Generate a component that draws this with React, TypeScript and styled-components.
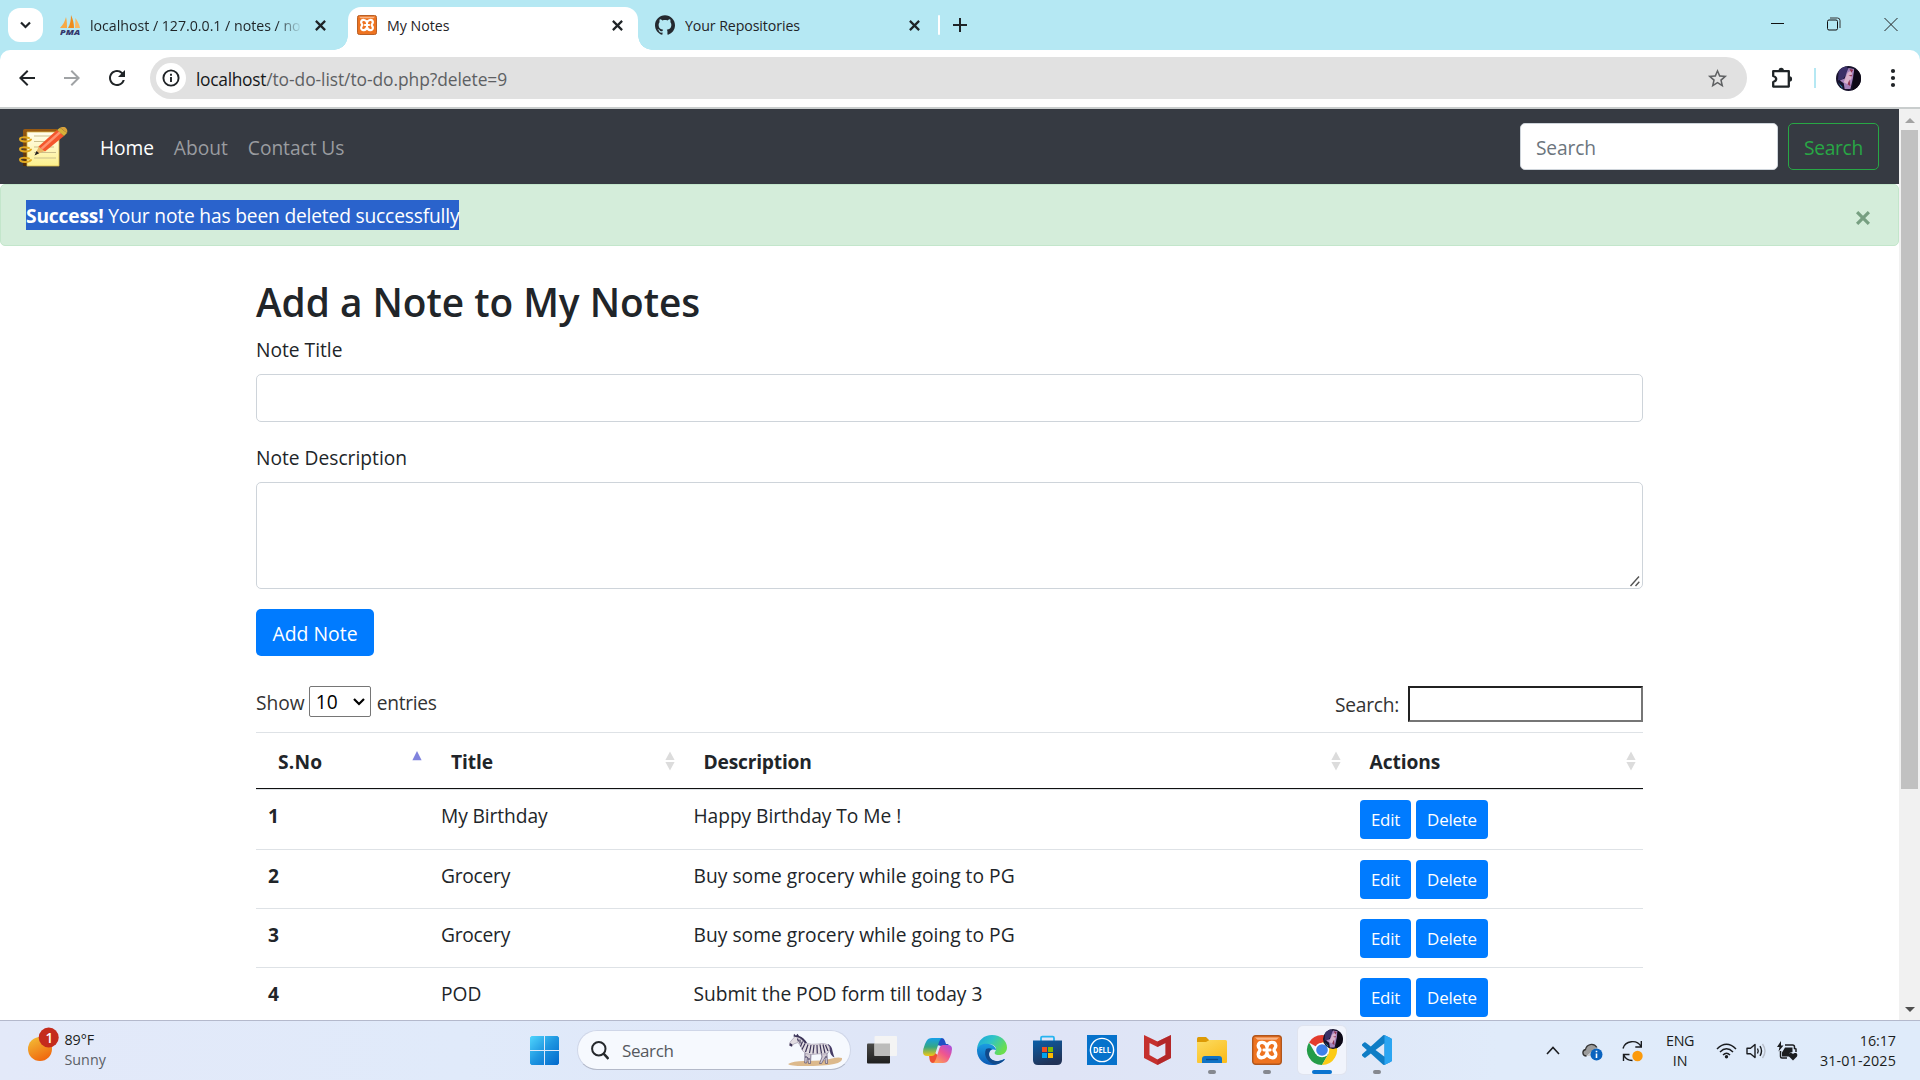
import React from "react";
import styled, { createGlobalStyle, css } from "styled-components";
import { MdArrowBack, MdArrowForward, MdRefresh, MdStarBorder } from "react-icons/md";
import { SiGithub } from "react-icons/si";

const GlobalStyle = createGlobalStyle`
  * { box-sizing: border-box; }
  body { margin: 0; overflow: hidden; background: #fff; }
  body, button, input { font-family: "Open Sans", "Noto Sans", sans-serif; }
  svg { display: block; flex: none; }
`;

/* ---------- shared ---------- */

const Screen = styled.div`
  display: flex;
  flex-direction: column;
  width: 1920px;
  height: 1080px;
  overflow: hidden;
  color: #212529;
`;

const Text = styled.span<{ $ls?: number }>`
  white-space: nowrap;
  letter-spacing: ${(p) => p.$ls ?? 0}px;
`;

/* ---------- browser chrome ---------- */

const TabStrip = styled.div`
  display: flex;
  height: 50px;
  flex: none;
  background: #b5e8f3;
  padding: 8px 0 0 8px;
  color: #1f2427;
`;

const TabSearch = styled.div`
  display: grid;
  place-items: center;
  width: 35px;
  height: 34px;
  border-radius: 12px;
  background: #fff;
`;

const Tab = styled.div<{ $active?: boolean; $width: number; $end?: number }>`
  position: relative;
  display: flex;
  align-items: center;
  width: ${(p) => p.$width}px;
  height: ${(p) => (p.$active ? 43 : 34)}px;
  margin-top: ${(p) => (p.$active ? -1 : 0)}px;
  padding: ${(p) => (p.$active ? "0 15px 7px 9px" : `0 ${p.$end}px 0 17px`)};
  font-size: 14.2px;
  ${(p) =>
    p.$active &&
    css`
      background: #fff;
      border-radius: 13px 13px 0 0;
      &::before,
      &::after {
        content: "";
        position: absolute;
        bottom: 0;
        width: 14px;
        height: 14px;
      }
      &::before {
        left: -14px;
        background: radial-gradient(circle at 0 0, transparent 13.5px, #fff 14px);
      }
      &::after {
        right: -14px;
        background: radial-gradient(circle at 100% 0, transparent 13.5px, #fff 14px);
      }
    `}
`;

const TabLabel = styled.div<{ $fade?: boolean; $ls?: number }>`
  flex: 1;
  min-width: 0;
  overflow: hidden;
  white-space: nowrap;
  margin: 1px 13px 0 10px;
  letter-spacing: ${(p) => p.$ls ?? 0}px;
  line-height: 22px;
  ${(p) =>
    p.$fade &&
    css`
      mask-image: linear-gradient(to right, #000 88%, transparent 100%);
    `}
`;

const TabSeparator = styled.div`
  width: 2px;
  height: 20px;
  margin-top: 7px;
  border-radius: 1px;
  background: #fff;
`;

const NewTab = styled.div`
  padding: 10px 0 0 13px;
`;

const WindowButtons = styled.div`
  display: flex;
  gap: 43px;
  margin-left: auto;
  padding: 9px 22px 0 0;
`;

const ToolbarBack = styled.div`
  flex: none;
  height: 59px;
  background: #b5e8f3;
`;

const Toolbar = styled.div`
  display: flex;
  align-items: center;
  height: 59px;
  padding: 0 19px 1px 15px;
  background: #fff;
  border-bottom: 2px solid #c9cdcd;
  border-radius: 10px 10px 0 0;
  color: #202427;
`;

const NavIcons = styled.div`
  display: flex;
  gap: 21px;
  width: 135px;
`;

const Omnibox = styled.div`
  display: flex;
  align-items: center;
  width: 1597px;
  height: 42px;
  padding: 0 18px 0 6px;
  border-radius: 21px;
  background: #e1e1e1;
  font-size: 17.4px;
  color: #5d6063;
`;

const SiteInfo = styled.div`
  display: grid;
  place-items: center;
  width: 30px;
  height: 30px;
  margin-right: 10px;
  border-radius: 50%;
  background: #fff;
`;

const Url = styled.div`
  display: flex;
  padding-top: 2px;
`;

const UrlHost = styled(Text)`
  color: #17191b;
`;

const OmniStar = styled.div`
  margin-left: auto;
  color: #5f6163;
`;

const ToolbarDivider = styled.div`
  width: 2px;
  height: 20px;
  margin: 0 20px 0 21px;
  background: #b5e8f3;
`;

const ToolbarEnd = styled.div`
  display: flex;
  align-items: center;
  margin-left: 24px;
`;

const MenuDots = styled.div`
  margin-left: 29px;
`;

/* ---------- page ---------- */

const Viewport = styled.div`
  display: flex;
  height: 911px;
  flex: none;
  overflow: hidden;
`;

const Page = styled.div`
  width: 1899px;
  height: 911px;
  overflow: hidden;
  font-size: 19.2px;
  line-height: 30px;
`;

const Navbar = styled.nav`
  display: flex;
  align-items: center;
  height: 75px;
  padding: 0 20px 0 19px;
  background: #363a42;
`;

const Brand = styled.a`
  padding-top: 3px;
`;

const NavLinks = styled.div`
  display: flex;
  gap: 20px;
  margin-left: 29px;
  padding-top: 2px;
`;

const NavLink = styled.a<{ $active?: boolean }>`
  color: ${(p) => (p.$active ? "#fff" : "#9a9ca0")};
`;

const NavSearch = styled.div`
  display: flex;
  gap: 10px;
  margin-left: auto;
`;

const NavInput = styled.input`
  width: 258px;
  height: 47px;
  padding: 2px 15px 0;
  border: 1px solid #ced4da;
  border-radius: 5px;
  font-size: 19.2px;
  letter-spacing: -0.15px;
  &::placeholder {
    color: #6c757d;
    opacity: 1;
  }
`;

const OutlineButton = styled.button`
  width: 91px;
  height: 47px;
  padding: 1px 0 0;
  border: 1px solid #28a745;
  border-radius: 5px;
  background: transparent;
  color: #28a745;
  font-size: 19.2px;
  letter-spacing: -0.3px;
`;

const Alert = styled.div`
  display: flex;
  align-items: flex-start;
  justify-content: space-between;
  height: 62px;
  padding: 15px 28.5px 0 25px;
  border: 1px solid #c3e6cb;
  border-radius: 5px;
  background: #d4edda;
`;

const Selection = styled.span`
  height: 30px;
  background: #2a63cc;
  color: #fff;
  letter-spacing: -0.17px;
  white-space: nowrap;
  line-height: 32px;
`;

const AlertClose = styled.div`
  padding-top: 11px;
`;

const Container = styled.main`
  width: 1387px;
  margin: 30px 0 0 256px;
`;

const Heading = styled.h2`
  height: 48px;
  margin: 0 0 10px;
  padding-top: 2px;
  font-size: 38.8px;
  font-weight: 600;
  line-height: 48px;
  letter-spacing: -0.03px;
`;

const Label = styled.label`
  display: block;
  height: 30px;
  padding-top: 1px;
  margin-bottom: 10px;
`;

const fieldBox = css`
  display: block;
  width: 100%;
  border: 1px solid #ced4da;
  border-radius: 5px;
  background: #fff;
  margin-bottom: 20px;
`;

const TitleField = styled.input`
  ${fieldBox}
  height: 48px;
`;

const DescriptionField = styled.div`
  ${fieldBox}
  display: flex;
  align-items: flex-end;
  justify-content: flex-end;
  height: 107px;
  padding: 1px;
`;

const PrimaryButton = styled.button<{ $small?: boolean; $width: number }>`
  width: ${(p) => p.$width}px;
  height: ${(p) => (p.$small ? 38.5 : 47)}px;
  padding: 1px 0 0;
  border: 0;
  border-radius: ${(p) => (p.$small ? 4 : 5)}px;
  background: #007bff;
  color: #fff;
  font-size: ${(p) => (p.$small ? 16.9 : 19.4)}px;
  letter-spacing: ${(p) => (p.$small ? -0.2 : 0)}px;
`;

const TableControls = styled.div`
  display: flex;
  justify-content: space-between;
  height: 46px;
  margin-top: 30px;
  color: #333;
`;

const LengthControl = styled.div`
  display: flex;
  align-items: center;
  height: 34px;
`;

const LengthSelect = styled.div`
  display: flex;
  align-items: center;
  justify-content: space-between;
  width: 62px;
  height: 31px;
  margin: -3px 6px 0 4px;
  padding: 1px 5px 0 6px;
  border: 1px solid #767676;
  border-radius: 2px;
  color: #000;
`;

const FilterControl = styled.label`
  display: flex;
  align-items: center;
  gap: 9px;
  height: 36px;
`;

const FilterLabel = styled(Text)`
  padding-top: 2px;
`;

const FilterInput = styled.input`
  width: 235px;
  height: 36px;
  border: 2px inset #767676;
  background: #fff;
`;

const Row = styled.div<{ $head?: boolean; $height: number }>`
  display: grid;
  grid-template-columns: 173px 252.5px 666px 295.5px;
  height: ${(p) => p.$height}px;
  border-top: 1px solid #dee2e6;
  ${(p) =>
    p.$head &&
    css`
      border-bottom: 1px solid #111;
      font-weight: 700;
    `}
`;

const HeadCell = styled.div`
  display: flex;
  justify-content: space-between;
  padding: 14px 6px 0 22px;
`;

const SortIcon = styled.div`
  padding-top: 4px;
`;

const Cell = styled.div<{ $bold?: boolean }>`
  padding: 11px 0 0 12px;
  font-weight: ${(p) => (p.$bold ? 700 : 400)};
`;

const ActionCell = styled.div`
  display: flex;
  align-items: flex-start;
  gap: 5px;
  padding: 10px 0 0 12.5px;
`;

const Scrollbar = styled.div`
  display: flex;
  flex-direction: column;
  align-items: center;
  width: 21px;
  height: 911px;
  background: #f1f1f1;
`;

const ScrollArrow = styled.div<{ $down?: boolean }>`
  width: 0;
  height: 0;
  border: 5px solid transparent;
  border-top-width: ${(p) => (p.$down ? 5 : 0)}px;
  border-bottom-width: ${(p) => (p.$down ? 0 : 5)}px;
  border-top-color: ${(p) => (p.$down ? "#505050" : "transparent")};
  border-bottom-color: ${(p) => (p.$down ? "transparent" : "#a3a3a3")};
  margin: ${(p) => (p.$down ? "auto 0 8px" : "9px 0 7px")};
`;

const ScrollThumb = styled.div`
  width: 17px;
  height: 659px;
  background: #c1c1c1;
`;

/* ---------- taskbar ---------- */

const Taskbar = styled.footer`
  display: flex;
  height: 60px;
  flex: none;
  border-top: 1px solid #b4b9cc;
  background: linear-gradient(90deg, #e3e9f9 0%, #e0eafa 24%, #dfe7f8 40%, #dfe4f6 55%, #dfe7f7 68%, #e0ebfa 78%, #dfebfa 100%);
  color: #1b1d20;
  font-size: 14.3px;
`;

const Weather = styled.div`
  display: flex;
  gap: 4.5px;
  width: 530px;
  padding: 6px 0 0 28px;
`;

const WeatherText = styled.div`
  display: flex;
  flex-direction: column;
  padding-top: 3px;
  line-height: 20px;
`;

const Muted = styled(Text)`
  color: #5b5f66;
`;

const Apps = styled.div`
  display: flex;
  gap: 7px;
  padding-top: 5px;
`;

const AppSlot = styled.div<{ $active?: boolean; $state?: "open" | "focus" }>`
  display: flex;
  flex-direction: column;
  align-items: center;
  width: 48px;
  height: 48px;
  padding-top: 9px;
  border-radius: 5px;
  ${(p) => p.$active && "background: #f1f4fc; box-shadow: 0 0 0 1px #e0e4ef;"}
  &::after {
    content: "";
    width: ${(p) => (p.$state === "focus" ? 20 : 8)}px;
    height: 4px;
    margin-top: 5px;
    border-radius: 2px;
    background: ${(p) => (p.$state === "focus" ? "#0a73cf" : p.$state ? "#85888f" : "transparent")};
  }
`;

const StartSlot = styled.div`
  padding: 10px 11px 0 0;
`;

const TaskSearch = styled.div`
  display: flex;
  align-items: center;
  width: 274px;
  height: 40px;
  margin: 4px 0 0;
  padding: 0 7px 0 13px;
  border: 1px solid #cfd6e8;
  border-bottom-color: #b3b9c9;
  border-radius: 20px;
  background: #f6f9fe;
  font-size: 17px;
  color: #55585d;
`;

const TaskSearchLabel = styled(Text)`
  margin: 0 auto 0 13px;
`;

const Tray = styled.div`
  display: flex;
  align-items: center;
  width: 374px;
  margin-left: auto;
  padding: 0 24px 0 0;
`;

const TraySvg = styled.svg<{ $left: number; $top?: number }>`
  margin-left: ${(p) => p.$left}px;
  margin-top: ${(p) => p.$top ?? 0}px;
`;

const Stack = styled.div<{ $left?: string; $align: string }>`
  display: flex;
  flex-direction: column;
  align-items: ${(p) => p.$align};
  margin-left: ${(p) => p.$left ?? "auto"};
  line-height: 20px;
`;

/* ---------- drawings ---------- */

const Cross = ({ size = 11, color = "#1f2427", w = 2 }: { size?: number; color?: string; w?: number }) => (
  <svg width={size} height={size} viewBox="0 0 10 10">
    <path d="M.8.8l8.4 8.4M9.2.8L.8 9.2" stroke={color} strokeWidth={w} />
  </svg>
);

const PmaIcon = () => (
  <svg width="20" height="20" viewBox="0 0 20 20">
    <path d="M6 2c1 4 1 8 1 11H0C3 10 5 6 6 2z" fill="#f7a944" />
    <path d="M11 0c2 4 3 9 3 13H8c2-3 3-8 3-13z" fill="#ef8c1c" />
    <path d="M15.500 3c2 3 4 7 4.500 10h-5z" fill="#f9b862" />
    <text x="0" y="19.500" fontSize="7.500" fontWeight="800" fontStyle="italic" fill="#33376c" textLength="20" lengthAdjust="spacingAndGlyphs">PMA</text>
  </svg>
);

const XamppIcon = ({ size }: { size: number }) => (
  <svg width={size} height={size} viewBox="0 0 30 30">
    <rect x=".7" y=".7" width="28.600" height="28.600" rx="3" fill="#ee7320" stroke="#b1561c" strokeWidth="1.400" />
    <path d="M3 2.500h24l-2.500 2.200h-19z" fill="#f8b688" />
    <path
      d="M15 11.800C14 6.500 7 6 6.200 10.500 6 12.800 8.200 13.500 8 15c-.2 1.400-2 2-1.800 4.500.5 4.500 7.300 4.500 8.800-1.300 1.500 5.800 8.300 5.800 8.800 1.300.2-2.500-1.800-3.100-1.800-4.500 0-1.500 2-2.200 1.800-4.500C23 6 16 6.500 15 11.800z"
      fill="none" stroke="#fff" strokeWidth="3.300" strokeLinejoin="round"
    />
    <path d="M15 12v6M11.800 15h6.400" stroke="#fff" strokeWidth="2.800" strokeLinecap="round" />
  </svg>
);

const Avatar = ({ size }: { size: number }) => (
  <svg width={size} height={size} viewBox="0 0 26 26">
    <defs>
      <clipPath id={`face${size}`}><circle cx="13" cy="13" r="13" /></clipPath>
    </defs>
    <g clipPath={`url(#face${size})`}>
      <path d="M0 0h26v26H0z" fill="#17122c" />
      <path d="M3 3l7-3 4 4-7 10-5 1z" fill="#3a3068" />
      <path d="M13 2l6 1-1 8-3 13H9l-1-6-4-3 5-2 2-6z" fill="#a583bb" />
      <path d="M12 7l5-3-1 9-4 6-4-2z" fill="#d9b2cc" />
      <path d="M14 3l4 1-2 3zM13 10l4-1-1 2zM12 19l2-5 1 7z" fill="#8f3350" />
      <path d="M19 3l7 3v20h-9z" fill="#0d0916" />
      <path d="M2 17l4 4 1 3z" fill="#2fa0c8" />
    </g>
  </svg>
);

const NotebookLogo = () => (
  <svg width="52" height="42" viewBox="0 0 52 42">
    <defs>
      <linearGradient id="paper" x2="0" y2="1"><stop stopColor="#fffdf0" /><stop offset="1" stopColor="#fdf08c" /></linearGradient>
      <linearGradient id="cover" x2="0" y2="1"><stop stopColor="#9a5a12" /><stop offset="1" stopColor="#4d2a06" /></linearGradient>
    </defs>
    <path d="M4 4q0-2 2-2h32v37H4z" fill="url(#cover)" />
    <path d="M8 5h32v34H8z" fill="url(#paper)" stroke="#d8b84a" strokeWidth=".8" />
    <path d="M15 9h22M15 14.500h20M15 20h20M15 25.500h22M15 31h22" stroke="#cbbf8c" />
    <g fill="none" stroke="#e0a821" strokeWidth="2" strokeLinecap="round">
      <path d="M12 12.500c-2 3-11 2.500-11-.5 0-2 5-2 9-1M12 22.500c-2 3-11 2.500-11-.5 0-2 5-2 9-1M12 33c-2 3-11 2.500-11-.5 0-2 5-2 9-1" />
    </g>
    <path d="M16 28l4-9 6 5z" fill="#e8b765" />
    <path d="M15.500 28.500l2-4.500 2.700 2.200z" fill="#222" />
    <path d="M19.500 19.500L38 3l7 6-19 15.500z" fill="#f4552c" />
    <path d="M21.500 21L40 4.500l2 1.600-18.500 16.500z" fill="#ff9370" />
    <path d="M38 3l3-2.300 7 5.300-3 3z" fill="#d8b13a" />
    <path d="M41 .7q4-1.700 6 .3t1 5z" fill="#d9a23a" />
  </svg>
);

const PuzzleIcon = () => (
  <svg width="22" height="22" viewBox="0 0 22 22">
    <path d="M2.200 4.200h15.600v15.400H2.200v-4.600q3-1 3-3t-3-3z" fill="none" stroke="#1f2427" strokeWidth="2.300" strokeLinejoin="round" />
    <path d="M7.500 3.500a2.700 2.700 0 0 1 5.400 0zM18.500 9.300a2.600 2.600 0 0 1 0 5.200z" fill="#1f2427" />
  </svg>
);

const SortArrows = ({ asc }: { asc?: boolean }) => (
  <svg width="12" height="20" viewBox="0 0 12 20">
    {asc ? <path d="M6 0l4.600 9.300H1.400z" fill="#8083dd" /> : <path d="M6 .5l4.600 8.500H1.400zM6 19.500l4.600-8.500H1.400z" fill="#dcdcdc" />}
  </svg>
);

const SunBadge = () => (
  <svg width="32" height="36" viewBox="0 0 32 36">
    <defs><linearGradient id="sun" x1=".2" y1="0" x2=".7" y2="1"><stop stopColor="#f2bb35" /><stop offset="1" stopColor="#f0640c" /></linearGradient></defs>
    <circle cx="12" cy="22" r="12" fill="url(#sun)" />
    <circle cx="20.700" cy="10.500" r="10" fill="#c42b1c" />
    <text x="21.300" y="15.500" fontSize="13.500" fontWeight="600" fill="#fff" textAnchor="middle">1</text>
  </svg>
);

const StartIcon = () => (
  <svg width="29" height="29" viewBox="0 0 29 29">
    <defs><linearGradient id="win" gradientUnits="userSpaceOnUse" x1="0" y1="0" x2="29" y2="29"><stop stopColor="#4fd5fd" /><stop offset=".5" stopColor="#1e95e0" /><stop offset="1" stopColor="#0168cc" /></linearGradient></defs>
    <path d="M1.500 0H14v14H0V1.500zM15 0h12.500L29 1.500V14H15zM0 15h14v14H1.500L0 27.500zM15 15h14v12.500L27.500 29H15z" fill="url(#win)" />
  </svg>
);

const Zebra = () => (
  <svg width="55" height="34" viewBox="0 0 55 34">
    <path d="M0 31q5-3 16-3 20 0 28-2.500 6-1.500 10-.5 1 4-8 6-10 2-30 2-14 0-16-2z" fill="#dcb98c" />
    <path d="M40 11q4 2 4.500 7 1 4 2 6.500-4-2-4.500-6t-3-5z" fill="#453c66" />
    <path d="M17 19l-.3 11h2l.8-6 1 6.500h2L23 20zM33 18l1 6-2.500 6.500h2l3.500-6 .5 6h2l-.5-9 1-5z" fill="#d3ccd4" stroke="#5a5173" strokeWidth=".7" />
    <path d="M1.500 12.500Q.8 10 3 8l4-4.500Q8 2.500 10 3q5 1 8 7 5 2 12 1 8-1.500 11 2 2 4-1 7-3 1.500-9 .8-8 1.700-13-.3-4-1.800-5-6.500L10 9.500 5.500 11 4 13.500z" fill="#e2dde2" stroke="#8a839b" strokeWidth=".5" />
    <path d="M5.500 3.500L6 .8l2 2 1.500-2L11 3q5 1.500 8 7l-2 .5Q13 4.500 9 4.200z" fill="#3c3458" />
    <path d="M1.500 12.500L2 10l2.500 1.500-.7 2z" fill="#3c3458" />
    <path d="M9.500 5.500l1 3M12 6.500v4M14.500 8.500l-2 5M17 10.500l-3 6M20 11.500l-2.500 7.500M23 12l-1.500 8M26 12l-1 8.500M29 12l.3 8.500M32 11.500l1.500 9M35 11.500l2 8.500M37.500 12l2.500 6M17 24h2M20 26h2M37 24h2" stroke="#3c3458" strokeWidth="1.200" fill="none" />
  </svg>
);

const TaskViewIcon = () => (
  <svg width="30" height="30" viewBox="0 0 30 30">
    <defs>
      <linearGradient id="tvDark" x2="0" y2="1"><stop stopColor="#4a4a48" /><stop offset="1" stopColor="#1f1f1f" /></linearGradient>
    </defs>
    <rect x="0" y="8.500" width="23" height="20" rx="1" fill="url(#tvDark)" />
    <rect x="7.500" y="1" width="22.500" height="20" rx="1" fill="#f4f4f4" />
    <path d="M7.500 8.500H23V21H7.500z" fill="#bcbcbb" />
  </svg>
);

const CopilotIcon = () => (
  <svg width="29" height="30" viewBox="0 0 29 30">
    <defs>
      <linearGradient id="cpA" x2="0" y2="1"><stop stopColor="#159fe9" /><stop offset=".5" stopColor="#35a783" /><stop offset="1" stopColor="#f4c713" /></linearGradient>
      <linearGradient id="cpB" x1="1" x2=".2" y2="1"><stop stopColor="#a14ee8" /><stop offset=".5" stopColor="#ef5590" /><stop offset="1" stopColor="#fca357" /></linearGradient>
    </defs>
    <path d="M16 3h3q2 0 3 3l1 3h3l-4 3-8-2z" fill="#1f4fc4" />
    <path d="M10 28q-3 0-3.500-4L6 20l6-2 4 3-2 7z" fill="#ee5133" />
    <path d="M9 3h10q-2 1-3 4l-3.500 11q-1 3-4 3H4q-4 0-4-4 0-3 2-8l1.500-3Q5 3 9 3z" fill="url(#cpA)" />
    <path d="M20 28H10q2-1 3-4l3.500-11q1-3 4-3H25q4 0 4 4 0 3-2 8l-1.500 3Q24 28 20 28z" fill="url(#cpB)" />
  </svg>
);

const EdgeIcon = () => (
  <svg width="30" height="30" viewBox="0 0 30 30">
    <defs>
      <linearGradient id="edTop" x2="1" y2=".5"><stop stopColor="#1aa3e0" /><stop offset=".5" stopColor="#30c4c6" /><stop offset="1" stopColor="#6ade4e" /></linearGradient>
      <linearGradient id="edLeft" x2="0" y2="1"><stop stopColor="#1b9de2" /><stop offset="1" stopColor="#0b59b4" /></linearGradient>
    </defs>
    <path d="M0 14C1 5 7 0 15 0c9 0 15 6 15 12.500 0 5-4 7.500-8 7.500-4 0-5-1.500-4-3 3-4-1-8-6-8-6 0-11 3-12 5z" fill="url(#edTop)" />
    <path d="M0 14c2-5 8-6 12-5 4 .5 7 3.500 7 6-5-2-8 2-7 6 1 5 8 7 15 3l1 .5C25 28 20 30 15 30 6 30-.5 23 0 14z" fill="url(#edLeft)" />
    <path d="M9 14c-3 7 2 14 9 15.600 4-.6 8-2.600 10-5.600-7 4-14 2-15.600-3-.8-3 .6-6 2.600-7-2-1-4-1-6 0z" fill="#114a8b" />
  </svg>
);

const StoreIcon = () => (
  <svg width="29" height="30" viewBox="0 0 29 30">
    <defs><linearGradient id="st" x2=".4" y2="1"><stop stopColor="#0b5fa9" /><stop offset="1" stopColor="#213357" /></linearGradient></defs>
    <path d="M8 6V3q0-1.300 1.300-1.300h10.400Q21 1.700 21 3v3" fill="none" stroke="#27b4f0" strokeWidth="1.800" />
    <path d="M0 5.500h29V25q0 5-5 5H5q-5 0-5-5z" fill="url(#st)" />
    <path d="M9 12h5v5H9z" fill="#f25022" /><path d="M15 12h5v5h-5z" fill="#7fba00" />
    <path d="M9 18h5v5H9z" fill="#00a4ef" /><path d="M15 18h5v5h-5z" fill="#ffb900" />
  </svg>
);

const DellIcon = () => (
  <svg width="30" height="30" viewBox="0 0 30 30">
    <path d="M0 0h30v30H0z" fill="#0672cb" />
    <circle cx="15" cy="15" r="11.600" fill="none" stroke="#fff" strokeWidth="1.400" />
    <text x="6" y="18" fontSize="8.500" fontWeight="700" fill="#fff" textLength="18" lengthAdjust="spacingAndGlyphs">DELL</text>
  </svg>
);

const McAfeeIcon = () => (
  <svg width="27" height="30" viewBox="0 0 27 30">
    <path d="M0 0l13.500 6.500L27 0v23l-13.500 7L0 23z" fill="#c5302e" />
    <path d="M5.500 8l8 4 8-4v12l-8 4.500-8-4.500z" fill="#e0e5f7" />
    <path d="M13.500 6.500L27 0v23l-13.500 7v-5.500l8-4.500V8l-8 4z" fill="#a62027" opacity=".55" />
  </svg>
);

const FolderIcon = () => (
  <svg width="30" height="30" viewBox="0 0 30 30">
    <defs><linearGradient id="fo" x2=".7" y2="1"><stop stopColor="#fcdc62" /><stop offset="1" stopColor="#fbbd1d" /></linearGradient></defs>
    <path d="M0 3.500Q0 2 1.500 2H9l3 3v4H0z" fill="#dd9a05" />
    <path d="M0 7h9l3.500-2H28.500Q30 5 30 6.500V27q0 1-1 1H1q-1 0-1-1z" fill="url(#fo)" />
    <path d="M5 28v-4q0-3 3-3h14q3 0 3 3v4z" fill="#1073c5" />
    <path d="M9 24.500h12" stroke="#0a4b8b" strokeWidth="1.300" />
  </svg>
);

const ChromeIcon = () => (
  <svg width="30" height="30" viewBox="0 0 30 30" overflow="visible">
    <path d="M15 15L2 7.500A15 15 0 0 1 28 7.500H15z" fill="#e33b2e" />
    <path d="M15 15l6.500 3.700L15 30A15 15 0 0 1 2 7.500l6.500 11.200z" fill="#249c48" />
    <path d="M15 7.500h13A15 15 0 0 1 15 30l6.500-11.300z" fill="#fccb16" />
    <circle cx="15" cy="15" r="7.300" fill="#fff" />
    <circle cx="15" cy="15" r="5.800" fill="#3f80ea" />
    <g transform="translate(16 -6)"><Avatar size={20} /></g>
  </svg>
);

const VsCodeIcon = () => (
  <svg width="30" height="30" viewBox="0 0 24 24">
    <path d="M23.15 2.587L18.21.21a1.494 1.494 0 0 0-1.705.29l-9.46 8.63-4.12-3.128a.999.999 0 0 0-1.276.057L.327 7.261A1 1 0 0 0 .326 8.74L3.899 12 .326 15.26a1 1 0 0 0 .001 1.479L1.65 17.94a.999.999 0 0 0 1.276.057l4.12-3.128 9.46 8.63a1.492 1.492 0 0 0 1.704.29l4.942-2.377A1.5 1.5 0 0 0 24 20.06V3.939a1.5 1.5 0 0 0-.85-1.352zm-5.146 14.861L10.826 12l7.178-5.448v10.896z" fill="#0f7dc5" />
    <path d="M18.200.2l4.950 2.387a1.500 1.500 0 0 1 .85 1.352V20.060a1.500 1.500 0 0 1-.85 1.353L18.200 23.800q-.2-.3-.2-.8V1q0-.5.2-.8z" fill="#2aa5f2" />
  </svg>
);

/* ---------- data ---------- */

const columns = [
  { name: "S.No", ls: 0.2, asc: true },
  { name: "Title", ls: -0.1 },
  { name: "Description", ls: -0.2 },
  { name: "Actions", ls: -0.1 },
];

const notes = [
  { title: "My Birthday", tls: -0.1, text: "Happy Birthday To Me !", ls: -0.05, h: 60 },
  { title: "Grocery", tls: -0.25, text: "Buy some grocery while going to PG", ls: 0.03, h: 59 },
  { title: "Grocery", tls: -0.25, text: "Buy some grocery while going to PG", ls: 0.03, h: 59 },
  { title: "POD", tls: 0, text: "Submit the POD form till today 3", ls: -0.02, h: 59 },
];

export default function App() {
  return (
    <Screen>
      <GlobalStyle />
      <TabStrip>
        <TabSearch>
          <svg width="11" height="8" viewBox="0 0 11 8"><path d="M1 1.500l4.500 4.500L10 1.500" fill="none" stroke="#1f2427" strokeWidth="2.200" /></svg>
        </TabSearch>
        <Tab $width={305} $end={22}>
          <PmaIcon />
          <TabLabel $fade $ls={-0.02}>localhost / 127.0.0.1 / notes / no</TabLabel>
          <Cross />
        </Tab>
        <Tab $active $width={290}>
          <XamppIcon size={20} />
          <TabLabel>My Notes</TabLabel>
          <Cross />
        </Tab>
        <Tab $width={300} $end={18}>
          <SiGithub size={20} color="#24292f" />
          <TabLabel $ls={-0.1}>Your Repositories</TabLabel>
          <Cross />
        </Tab>
        <TabSeparator />
        <NewTab>
          <svg width="14" height="14" viewBox="0 0 14 14"><path d="M7 0v14M0 7h14" stroke="#1f2427" strokeWidth="2" /></svg>
        </NewTab>
        <WindowButtons>
          <svg width="13" height="14" viewBox="0 0 13 14"><path d="M0 6.500h13" stroke="#111" /></svg>
          <svg width="14" height="14" viewBox="0 0 14 14">
            <rect x=".5" y="3" width="10" height="10" rx="1.500" fill="none" stroke="#111" />
            <path d="M3 1h7.500Q13 1 13 3.500V11" fill="none" stroke="#333" strokeWidth="1" />
          </svg>
          <svg width="14" height="14" viewBox="0 0 14 14"><path d="M.5 1l13 13M13.500 1L.5 14" stroke="#222" /></svg>
        </WindowButtons>
      </TabStrip>

      <ToolbarBack>
        <Toolbar>
          <NavIcons>
            <MdArrowBack size={24} />
            <MdArrowForward size={24} color="#a0a3a5" />
            <MdRefresh size={24} />
          </NavIcons>
          <Omnibox>
            <SiteInfo>
              <svg width="18" height="18" viewBox="0 0 18 18">
                <circle cx="9" cy="9" r="7.600" fill="none" stroke="#202427" strokeWidth="1.900" />
                <path d="M9 8v5M9 4.700v2" stroke="#202427" strokeWidth="1.900" />
              </svg>
            </SiteInfo>
            <Url>
              <UrlHost $ls={-0.3}>localhost</UrlHost>
              <Text $ls={-0.06}>/to-do-list/to-do.php?delete=9</Text>
            </Url>
            <OmniStar><MdStarBorder size={23} /></OmniStar>
          </Omnibox>
          <ToolbarEnd>
            <PuzzleIcon />
            <ToolbarDivider />
            <Avatar size={25} />
            <MenuDots>
              <svg width="6" height="20" viewBox="0 0 6 20"><g fill="#202427"><circle cx="3" cy="3" r="2.100" /><circle cx="3" cy="10" r="2.100" /><circle cx="3" cy="17" r="2.100" /></g></svg>
            </MenuDots>
          </ToolbarEnd>
        </Toolbar>
      </ToolbarBack>

      <Viewport>
        <Page>
          <Navbar>
            <Brand><NotebookLogo /></Brand>
            <NavLinks>
              <NavLink $active><Text $ls={-0.1}>Home</Text></NavLink>
              <NavLink><Text>About</Text></NavLink>
              <NavLink><Text $ls={-0.05}>Contact Us</Text></NavLink>
            </NavLinks>
            <NavSearch>
              <NavInput placeholder="Search" />
              <OutlineButton>Search</OutlineButton>
            </NavSearch>
          </Navbar>
          <Alert>
            <Selection><strong>Success!</strong> Your note has been deleted successfully</Selection>
            <AlertClose><Cross size={14} color="#779f81" w={2.300} /></AlertClose>
          </Alert>
          <Container>
            <Heading>Add a Note to My Notes</Heading>
            <Label>Note Title</Label>
            <TitleField />
            <Label>Note Description</Label>
            <DescriptionField>
              <svg width="12" height="12" viewBox="0 0 12 12"><path d="M1.500 11l8.500-9.500M6.500 11l3.800-4.300" stroke="#555" strokeWidth="1.400" /></svg>
            </DescriptionField>
            <PrimaryButton $width={118}>Add Note</PrimaryButton>
            <TableControls>
              <LengthControl>
                <Text>Show</Text>
                <LengthSelect>
                  10
                  <svg width="12" height="8" viewBox="0 0 12 8"><path d="M1 1l5 5 5-5" fill="none" stroke="#000" strokeWidth="2.200" /></svg>
                </LengthSelect>
                <Text $ls={-0.3}>entries</Text>
              </LengthControl>
              <FilterControl>
                <FilterLabel $ls={-0.25}>Search:</FilterLabel>
                <FilterInput />
              </FilterControl>
            </TableControls>
            <Row $head $height={57}>
              {columns.map((c) => (
                <HeadCell key={c.name}>
                  <Text $ls={c.ls}>{c.name}</Text>
                  <SortIcon><SortArrows asc={c.asc} /></SortIcon>
                </HeadCell>
              ))}
            </Row>
            {notes.map((n, i) => (
              <Row key={i} $height={n.h}>
                <Cell $bold>{i + 1}</Cell>
                <Cell><Text $ls={n.tls}>{n.title}</Text></Cell>
                <Cell><Text $ls={n.ls}>{n.text}</Text></Cell>
                <ActionCell>
                  <PrimaryButton $small $width={51}>Edit</PrimaryButton>
                  <PrimaryButton $small $width={72}>Delete</PrimaryButton>
                </ActionCell>
              </Row>
            ))}
          </Container>
        </Page>
        <Scrollbar>
          <ScrollArrow />
          <ScrollThumb />
          <ScrollArrow $down />
        </Scrollbar>
      </Viewport>

      <Taskbar>
        <Weather>
          <SunBadge />
          <WeatherText>
            <Text $ls={-0.1}>89°F</Text>
            <Muted>Sunny</Muted>
          </WeatherText>
        </Weather>
        <Apps>
          <StartSlot><StartIcon /></StartSlot>
          <TaskSearch>
            <svg width="18" height="19" viewBox="0 0 18 19"><circle cx="7.800" cy="7.800" r="6.700" fill="none" stroke="#25282c" strokeWidth="2" /><path d="M12.500 12.500l5 5.500" stroke="#25282c" strokeWidth="2.600" /></svg>
            <TaskSearchLabel $ls={-0.4}>Search</TaskSearchLabel>
            <Zebra />
          </TaskSearch>
          <AppSlot><TaskViewIcon /></AppSlot>
          <AppSlot><CopilotIcon /></AppSlot>
          <AppSlot><EdgeIcon /></AppSlot>
          <AppSlot><StoreIcon /></AppSlot>
          <AppSlot><DellIcon /></AppSlot>
          <AppSlot><McAfeeIcon /></AppSlot>
          <AppSlot $state="open"><FolderIcon /></AppSlot>
          <AppSlot $state="open"><XamppIcon size={30} /></AppSlot>
          <AppSlot $active $state="focus"><ChromeIcon /></AppSlot>
          <AppSlot $state="open"><VsCodeIcon /></AppSlot>
        </Apps>
        <Tray>
          <TraySvg $left={0} width="14" height="9" viewBox="0 0 14 9"><path d="M1 8l6-6.500L13 8" fill="none" stroke="#1b1d20" strokeWidth="1.600" /></TraySvg>
          <TraySvg $left={22} $top={3} width="21" height="18" viewBox="0 0 21 18">
            <path d="M4.500 13C0 13-.2 7.500 3.500 6.500 4.500 1 11.500-.5 15 4.500" fill="#9c9c9c" stroke="#333" strokeWidth="1.300" />
            <path d="M4.500 13L15 4.500l1 3-6 5.500z" fill="#c7c9cc" />
            <circle cx="14.500" cy="11.500" r="6" fill="#0a63bf" />
            <path d="M14.500 10.500v4.500M14.500 7.800v1.500" stroke="#fff" strokeWidth="1.600" />
          </TraySvg>
          <TraySvg $left={19} width="21" height="22" viewBox="0 0 21 22">
            <path d="M1 8.500C3 .5 15-1 19 6.500M19.300 1v6h-6M1.500 21v-6.500h6M1.500 14.500q2.500 6 9 6" fill="none" stroke="#1b1d20" strokeWidth="1.400" />
            <circle cx="15.500" cy="16" r="5.200" fill="#fb9a0c" />
          </TraySvg>
          <Stack $left="23px" $align="center">
            <Text $ls={-0.3}>ENG</Text>
            <Text>IN</Text>
          </Stack>
          <TraySvg $left={22} width="21" height="16" viewBox="0 0 21 16">
            <g fill="none" stroke="#1b1d20" strokeWidth="1.500"><path d="M1 6q9.500-9.500 19 0M4 9q6.500-6.500 13 0M7 12q3.500-3.500 7 0" /></g>
            <circle cx="10.500" cy="13.800" r="1.700" fill="#1b1d20" />
          </TraySvg>
          <TraySvg $left={9} width="21" height="16" viewBox="0 0 21 16">
            <path d="M1 5.300h3.500L9 1.500v13l-4.500-3.800H1z" fill="none" stroke="#1b1d20" strokeWidth="1.400" strokeLinejoin="round" />
            <path d="M11.500 5.500q1.500 2.500 0 5M14 3.200q3 4.800 0 9.600" fill="none" stroke="#1b1d20" strokeWidth="1.400" />
            <path d="M16.500 1q5 7 0 14" fill="none" stroke="#b9bfca" strokeWidth="1.400" />
          </TraySvg>
          <TraySvg $left={9.500} width="21" height="20" viewBox="0 0 21 20">
            <path d="M8 4h7.500q2 0 2 2v1.500l1.500.5v3M3.500 10v5.500q0 1.500 1.500 1.500h5" fill="none" stroke="#1b1d20" strokeWidth="1.500" />
            <path d="M8 6.500h7.500V11l-3 1v3.500H5v-4zM4 0L0 6h2.500L1.500 10.500l5-6H4z" fill="#1b1d20" />
            <path d="M16 19.500l-4-4q-1-2.500 1-3.500 2-.5 3 1 1-1.500 3-1 2 1 1 3.500z" fill="#1b1d20" />
          </TraySvg>
          <Stack $align="flex-end">
            <Text $ls={-0.05}>16:17</Text>
            <Text $ls={0.15}>31-01-2025</Text>
          </Stack>
        </Tray>
      </Taskbar>
    </Screen>
  );
}
